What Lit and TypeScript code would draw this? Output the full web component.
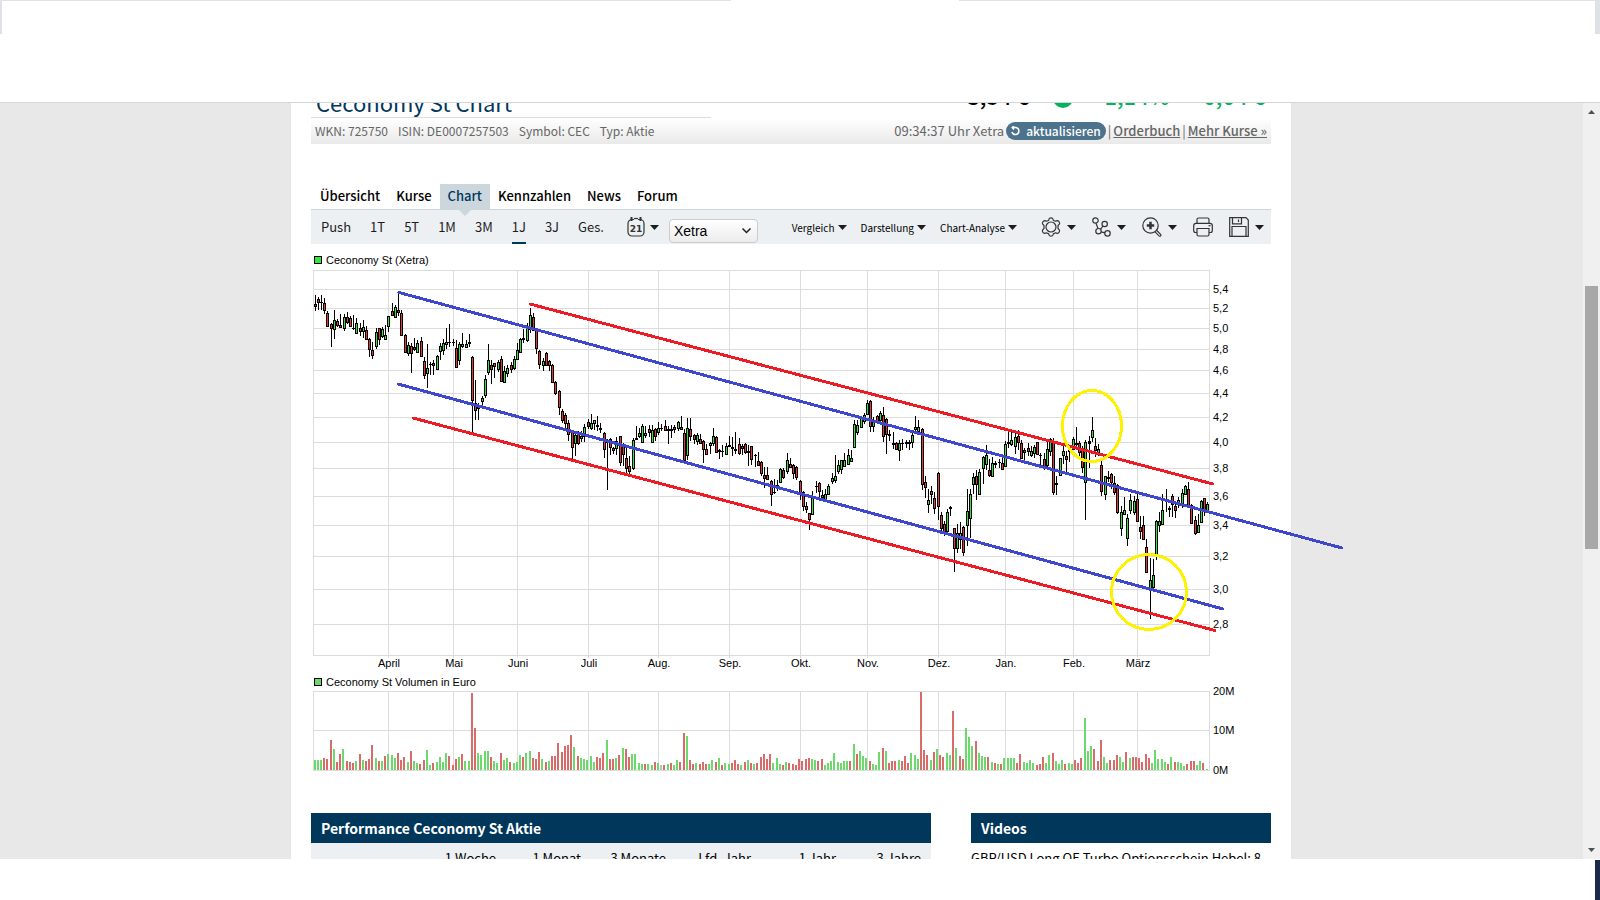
import { LitElement, html, svg, css, nothing } from "lit";
import { customElement } from "lit/decorators.js";
import { classMap } from "lit/directives/class-map.js";

const THIRD = 3;
const PLOT = { x: 2, y: 20, w: 896, h: 385 };
const VOL = { x: 2, y: 441, w: 896, h: 79 };

const MONTHS: [string, number][] = [
  ["April", 75], ["Mai", 140], ["Juni", 204], ["Juli", 275], ["Aug.", 345], ["Sep.", 416],
  ["Okt.", 487], ["Nov.", 554], ["Dez.", 625], ["Jan.", 692], ["Feb.", 760], ["März", 824],
];

const PRICES: [string, number][] = [
  ["5,4", 19], ["5,2", 38], ["5,0", 58], ["4,8", 79], ["4,6", 100], ["4,4", 123], ["4,2", 147],
  ["4,0", 172], ["3,8", 198], ["3,6", 226], ["3,4", 255], ["3,2", 286], ["3,0", 319], ["2,8", 354],
];

// Candles: x, high, body top, body bottom, low, tone (g rising, r falling, none flat).
// Each run counts in thirds of a plot unit from its own origin.
const CANDLES: { x: number; y: number; data: string }[] = [
  {
    x: -8, y: -10, data: `31,105,133,139,155,r 40,112,118,128,150,r 49,105,127,127,150 58,115,130,150,162,r 67,153,160,200,200,r
79,190,192,206,262,r 88,150,181,208,237,g 97,177,184,197,203,r 106,162,197,203,206,r 118,162,172,206,215,g 127,156,173,188,193,r
136,170,176,200,200,r 145,165,205,205,210 154,176,191,220,220,g 166,191,206,215,230,r 175,180,202,215,235,g 184,200,211,238,238,r
193,235,238,268,292,r 202,247,270,287,299,r 214,205,217,260,267,g 223,205,206,238,256,r 232,202,208,230,236,g 241,195,226,238,240,g
250,168,170,200,216,g 262,130,154,167,168,r 271,137,142,173,175,g 280,99,151,158,168,r 289,150,160,226,226,r 301,223,226,278,278,r
310,248,256,280,290,g 319,250,259,281,341,r 328,236,262,269,275,r 337,242,250,277,281,g 349,232,244,290,290,r 358,292,304,346,359,r
367,252,325,341,384,g 376,306,313,313,345 385,300,311,317,345,r 397,285,289,328,328,g 406,250,259,275,300,g 415,238,251,272,285,g
424,205,246,254,268,g 433,192,246,246,262 445,238,247,247,260 454,240,265,323,326,r 463,248,253,302,315,g 472,220,253,260,265,g
484,240,253,263,266,g 493,222,247,250,262 502,290,292,422,518,r 511,360,431,452,480,r 520,430,440,446,480,g 532,410,415,424,440,g
541,345,358,406,415,g 550,252,301,338,345,g 559,302,317,328,372,r 568,310,311,320,354,r 580,300,307,328,338,g 589,290,298,364,364,r
598,320,335,366,368,g 607,316,325,340,352,g 619,308,317,329,340,r 628,290,298,326,330,g 637,250,271,298,300,g 646,236,238,276,278,g
655,208,236,239,250 667,190,205,241,246,g 676,145,166,208,220,g 685,160,172,210,215,r 694,205,210,266,282,r 703,270,274,313,328,r
715,295,304,316,335,g 724,276,280,316,320,r 733,302,304,316,334,r 742,312,316,367,370,r 751,365,368,400,405,r 763,390,394,443,465,r
772,448,454,482,490,r 781,460,466,490,513,r 790,480,490,524,545,r 802,510,515,562,600,r 811,524,526,550,588,g 820,515,524,550,556,r
829,514,528,535,548,g 838,492,503,530,546,g 850,478,487,499,508,r 859,462,490,506,510,g 868,480,481,490,512,g 877,468,497,500,515
886,490,506,508,520 898,518,520,568,596,r 907,538,545,548,692`,
  },
  {
    x: 247, y: 90, data: `151,235,238,262,286,r 160,262,265,272,284,r 169,232,244,265,286,g 181,228,230,307,318,r 190,250,256,283,318,r
199,260,295,325,344,r 208,290,318,335,350,r 220,236,241,325,332,g 229,198,235,239,240 238,204,220,230,235,g 247,192,199,247,247,g
256,200,220,227,236,g 268,196,208,217,232,r 277,196,211,247,248,g 286,206,208,230,245,r 295,188,205,217,226,g 304,193,205,205,214
316,182,200,211,215,r 325,198,208,211,252 334,196,208,211,234 343,196,202,209,220,r 355,183,187,205,214,g 364,170,202,209,212,r
373,208,220,300,302,r 382,174,205,286,300,g 391,175,208,230,244,r 403,224,226,238,254,r 412,220,226,244,255,g 421,224,238,250,250,r
430,240,244,268,310,r 439,252,268,283,283,r 451,246,250,257,284,g 460,206,229,250,258,g 469,230,232,277,280,r 478,268,272,274,298
487,256,274,275,292 499,250,259,283,286,g 508,228,256,258,260 517,232,262,266,290,r 526,218,267,270,282 538,234,253,280,286,r
547,252,260,266,286,r 556,250,254,277,282,r 565,255,274,278,318,r 574,258,260,298,315,r 586,284,285,286,321 595,278,305,317,320,r
604,304,307,341,350,r 613,322,346,355,384,r 622,322,346,358,362,r 634,360,364,404,438,r 643,358,398,398,402 652,362,376,380,394,r
661,325,328,367,368,g 670,326,331,352,358,r 682,280,301,334,342,g 691,296,313,322,322,r 700,312,316,340,358,r 709,318,322,352,360,r
721,362,364,404,420,r 730,394,398,440,455,r 739,428,438,449,460,r 748,460,460,479,510,r 757,395,413,463,464,g`,
  },
  {
    x: 487, y: 110, data: `49,304,318,318,340 58,308,310,335,355,r 67,330,346,352,356,r 76,328,344,358,362,g 85,314,319,343,345,g
97,280,295,305,312,g 106,225,290,302,310,g 115,240,256,274,284,g 124,240,242,268,282,g 133,220,242,260,262,g 145,208,226,254,254,g
154,212,235,244,246,g 163,120,133,202,204,g 172,120,136,158,165,g 184,108,115,142,144,g 193,100,106,125,132,g 202,60,70,103,104,g
211,62,64,140,156,r 220,112,125,140,158,g 232,105,110,125,130,r 241,94,100,122,128,g 250,82,106,170,188,r 259,115,118,163,222,r
268,152,163,165,184 280,158,190,192,208 289,186,190,208,212,r 298,180,190,211,243,g 307,178,190,191,212 319,180,186,190,206
328,182,188,190,210 337,158,166,188,206,g 346,110,142,149,156,g 355,120,142,154,156,g 367,144,148,314,332,r 376,288,307,322,354,r
385,328,361,373,400,g 394,320,334,344,374,r 403,338,355,385,402,r 415,278,280,380,422,r 424,396,406,446,456,r 433,424,433,457,470,r
442,388,397,455,458,g 451,378,381,386,408 463,444,445,506,576,r 472,434,460,506,520,g 481,426,460,478,508,g 490,440,442,518,530,r
502,328,394,436,500,g 511,328,343,415,474,g 520,280,292,314,344,g 529,272,290,314,362,r 538,268,277,344,346,g 550,230,232,265,312,g
559,195,226,253,270,g 568,238,271,287,292,r 577,232,250,290,290,g 586,245,250,252,264 598,238,246,248,266 607,232,250,268,270,r`,
  },
  {
    x: 687, y: 110, data: `16,185,193,260,262,g 25,155,187,190,204 34,152,182,194,200,g 46,160,172,199,222,g 55,152,169,188,210,r
64,180,190,235,238,r 73,204,212,217,244,r 85,190,206,214,228,r 94,200,214,226,232,g 103,196,202,220,234,g 112,186,188,222,224,r
121,220,226,226,262 133,220,238,266,272,r 142,178,208,257,262,g 151,174,178,214,228,g 160,174,184,337,345,r 169,288,310,314,345
181,235,236,286,288,g 190,198,214,226,254,g 199,215,229,238,278,r 208,210,210,214,248 220,172,178,208,210,g 229,142,191,193,205
238,184,190,217,230,r 247,200,206,262,280,r 256,180,188,307,420,g 268,170,184,190,266 277,113,151,172,188,g 286,174,199,210,232,r
295,192,208,220,228,g 304,244,256,334,350,r 316,288,289,343,362,g 325,273,292,294,308 334,280,283,308,328,r 343,290,310,338,346,r
352,314,316,398,402,r 364,380,397,445,468,g 373,352,391,403,406,g 382,402,415,475,500,g 391,344,361,391,402,g 403,350,364,398,406,g
412,340,358,424,428,r 421,410,442,454,478,r 430,410,436,478,480,r 439,478,502,578,580,r 451,536,601,628,717,g 460,538,586,622,628,g
469,420,424,526,542,g 478,398,424,436,456,g 487,344,391,433,436,g 499,328,358,364,398,g 508,378,385,388,412 517,344,349,373,412,r
526,372,379,391,414,r 535,352,362,374,386,g 547,328,340,370,386,g 556,316,319,342,346,g 565,308,328,376,380,r 574,372,376,430,432,r
586,410,421,460,466,r 595,404,436,457,460,g 604,360,364,427,430,g 613,354,356,394,410,r 622,368,373,392,396,g`,
  },
];

// One entry for each trading day: tone and height in thirds of a plot unit.
const VOLUME = `g29 g29 g29 r35 r32 r89 g62 r23 r47 g62 r26 r23 r20 g26 r47 g29 r26 r32 r74 g35 r26 g26 r41 g47
g44 g35 r50 r29 r38 g23 r56 g26 g20 r17 r29 g59 g14 r20 g23 g38 g23 g50 r41
r14 r32 g38 r47 g26 g26 r230 r125 g50 g44 g56 g56 r38 g26 g20 r50 g29 g35 r23 g20 g23
g44 r38 g50 g56 r35 r32 r53 g32 r23 g26 r41 r41 r80 r53 r71 r74 r104 g68 r41 g35 g32 g29
g41 g23 r38 r35 r50 g89 r32 r32 g35 r44 g65 r62 r38 g47 g47 g20 g17 r17 g17 g14 r23 g20
n14 r14 g17 r20 g14 g29 r23 r110 g101 r29 r17 g20 r17 r23 r17 g17 g29 r23 g35 r14 g20 g17
r20 r29 r17 g14 r23 g29 r20 g17 r20 r38 r47 r32 r47 g20 g35 g17 r14 g23 r20 r17 r14
r32 r26 r32 r35 g32 g29 r26 r32 g14 g20 g26 g50 g23 g20 g26 g26 r26 g77 r47 g56 g41
g35 r26 g17 g14 g53 r65 g56 r20 r26 r26 g29 r26 r41 r20 g50 g44 g32 r233 r59 r44 g29 r53
g62 r44 r38 g50 g44 r176 g65 r41 r32 g125 g98 g71 r86 g50 g41 g38 r38 g23 r20 g17 r17
g35 g35 g35 g35 r20 r47 g23 g20 g29 g20 r14 r17 r38 g20 g44 r50 g26 g17 g29 r17 g20 g17
r29 r20 r35 g155 g56 g71 r62 r26 r89 g38 g20 r29 r29 r44 g38 g23 r53 g35 r38
r38 r35 r23 r47 r35 g20 g59 g32 g32 g23 r17 g38 r23 g23 g20 g11 r17 r26 r26 g14 g26 r20 g2`.split(/\s+/);

const CANDLE_FILL: Record<string, string> = { g: "#33e63a", r: "#e63737" };
const VOLUME_FILL: Record<string, string> = { g: "#6bd96b", r: "#d96b6b", n: "#c0c0c0" };

@customElement("price-chart")
class PriceChart extends LitElement {
  static styles = css`
    :host { display: block; }
    svg { display: block; width: 100%; overflow: visible; }
    text { font: 11px "Liberation Sans", Arial, sans-serif; fill: #000; }
    .crisp { shape-rendering: crispEdges; }
    .mark { fill: none; stroke-width: 3; stroke-linecap: round; }
    .blue { stroke: #3f48cc; }
    .red { stroke: #ed1c24; }
    .yellow { stroke: #fff200; }
  `;

  private grid() {
    const bottom = PLOT.h;
    const vertical = MONTHS.map(([, x]) => `M${x} 0V${bottom + 2}`).join("");
    const horizontal = PRICES.map(([, y]) => `M0 ${y}H${PLOT.w}`).join("");
    return svg`<path d="M0 0H${PLOT.w}V${bottom}H0Z${vertical}${horizontal}"
      transform="translate(${PLOT.x + 0.5} ${PLOT.y + 0.5})" fill="none" stroke="#dcdcdc"/>`;
  }

  private candles() {
    return CANDLES.map((run) =>
      run.data.split(/\s+/).map((entry) => {
        const [x, high, top, bottom, low, tone] = entry.split(",");
        const px = PLOT.x + run.x + Math.floor(+x / THIRD);
        const at = (v: string) => PLOT.y + run.y + Math.floor(+v / THIRD);
        const bodyHeight = Math.max(1, at(bottom) - at(top) + 1);
        return svg`<rect x=${px} y=${at(high)} width="1" height=${Math.max(1, at(low) - at(high))}/>
          <rect x=${px - 1} y=${at(top)} width="3" height=${bodyHeight}/>
          ${tone && bodyHeight > 2
            ? svg`<rect x=${px} y=${at(top) + 1} width="1" height=${bodyHeight - 2} fill=${CANDLE_FILL[tone]}/>`
            : nothing}`;
      })
    );
  }

  private volume() {
    const step = (VOL.w - 4) / (VOLUME.length - 1);
    return VOLUME.map((entry, i) => {
      const h = Math.max(1, Math.round(+entry.slice(1) / THIRD));
      return svg`<rect x=${VOL.x + 1 + Math.floor(i * step + 0.1)} y=${VOL.y + VOL.h - h} width="2" height=${h}
        fill=${VOLUME_FILL[entry[0]]}/>`;
    });
  }

  render() {
    const volumeGrid = MONTHS.map(([, x]) => `M${x} 0V${VOL.h}`).join("");
    return html`<svg viewBox="0 0 960 530" role="img" aria-label="Ceconomy St Kurs und Volumen">
      <rect class="crisp" x="3.5" y="6.5" width="7" height="7" fill="#33e63a" stroke="#000"/>
      <text x="15" y="14">Ceconomy St (Xetra)</text>
      <g class="crisp">${this.grid()}</g>
      <g class="crisp">${this.candles()}</g>
      ${PRICES.map(([label, y]) => svg`<text x="902" y=${PLOT.y + y + 4}>${label}</text>`)}
      ${MONTHS.map(([label, x]) => svg`<text x=${PLOT.x + x + 1} y="417" text-anchor="middle">${label}</text>`)}
      <rect class="crisp" x="3.5" y="428.5" width="7" height="7" fill="#6bd96b" stroke="#000"/>
      <text x="15" y="436">Ceconomy St Volumen in Euro</text>
      <path class="crisp" transform="translate(${VOL.x + 0.5} ${VOL.y + 0.5})" fill="none" stroke="#dcdcdc"
        d="M0 0H${VOL.w}V${VOL.h}H0ZM0 39H${VOL.w}${volumeGrid}"/>
      <g class="crisp">${this.volume()}</g>
      <text x="902" y="445">20M</text>
      <text x="902" y="484">10M</text>
      <text x="902" y="524">0M</text>
      <g class="mark crisp">
        <path class="blue" d="M88 42.5L1031 298M87 134L912 359"/>
        <path class="red" d="M219 54L902 234M102 168L904 380.500"/>
        <ellipse class="yellow" cx="781" cy="176" rx="29.500" ry="35.500"/>
        <ellipse class="yellow" cx="838" cy="342" rx="37.500" ry="37.500"/>
      </g>
    </svg>`;
  }
}

const caret = html`<svg class="caret" width="9" height="5" viewBox="0 0 9 5"><path d="M0 0H9L4.500 5Z"/></svg>`;

const calendarIcon = html`<svg class="icon" width="18" height="20" viewBox="0 0 18 20">
  <rect x="1" y="2.500" width="16" height="16.500" rx="4" />
  <path d="M4.500 0V4M13.500 0V4" stroke-width="2"/><path d="M7 2.500H11" stroke="#ecf0f3"/><path d="M7 1.500H11"/>
  <text x="9" y="15">21</text></svg>`;

const gearIcon = html`<svg class="icon" width="20" height="20" viewBox="0 0 20 20">
  <path d="M8 2.200Q8.300 .800 10 .800T12 2.200L12.500 3.500L14.500 4.200L16.300 3.700Q17.600 3.800 18.300 5.200T18.300 7.200L17 8.600V11.400L18.300 12.800Q18.900 13.600 18.200 15T16.300 16.300L14.500 15.800L12.500 16.700L12 17.900Q11.500 19.200 10 19.200T8 17.900L7.500 16.700L5.500 15.800L3.700 16.300Q2.400 16.200 1.700 15T1.700 12.800L3 11.400V8.600L1.700 7.200Q1.100 6.300 1.800 5T3.700 3.700L5.500 4.200L7.500 3.500Z"/>
  <circle cx="10" cy="10" r="5"/></svg>`;

const nodesIcon = html`<svg class="icon" width="19" height="20" viewBox="0 0 19 20">
  <circle cx="3.500" cy="3.500" r="2.700"/><circle cx="12.700" cy="7" r="2.700"/><circle cx="6.500" cy="14.200" r="2.700"/><circle cx="15.500" cy="16.400" r="2.700"/>
  <path d="M4 6.200L6 11.500M11 9L8.500 12.300M9.200 14.800L12.900 15.900"/></svg>`;

const zoomIcon = html`<svg class="icon" width="20" height="20" viewBox="0 0 20 20">
  <circle cx="8.500" cy="8.500" r="7.700"/><path d="M14.300 13L18.600 17.300Q19.300 18.200 18.600 18.900T17 18.900L12.800 14.600"/>
  <path d="M8.500 4.800V12.200M4.800 8.500H12.200" stroke-width="2.500"/></svg>`;

const printerIcon = html`<svg class="icon" width="20" height="20" viewBox="0 0 20 20">
  <path d="M4 6V2.500Q4 1 5.500 1H14.500Q16 1 16 2.500V6M4 15.500H2.500Q.700 15.500 .700 13.500V8.500Q.700 6.300 3 6.300H17Q19.300 6.300 19.300 8.500V13.500Q19.300 15.500 17.500 15.500H16"/>
  <path d="M4 11.500H16V17.500Q16 19 14.500 19H5.500Q4 19 4 17.500Z"/><path d="M15.500 8.700H17.500"/></svg>`;

const saveIcon = html`<svg class="icon" width="20" height="20" viewBox="0 0 20 20">
  <path d="M.700 .700H17L19.300 3V19.300H.700Z"/><path d="M3.500 1V6.800H12.500V1M9.500 2.500V5"/><path d="M3 19V9.500H17V19"/></svg>`;

@customElement("app-root")
class AppRoot extends LitElement {
  static styles = css`
    * { box-sizing: border-box; }
    :host {
      display: flex; flex-direction: column; height: 100vh; overflow: hidden; background: #fff;
      font-family: "Noto Sans CJK SC", "Open Sans", sans-serif; font-size: 12px; color: #000;
    }
    button { border: 0; padding: 0; margin: 0; background: none; font: inherit; color: inherit; cursor: pointer; }
    a { color: inherit; text-decoration: none; }
    h1, h2 { margin: 0; }

    .frame { flex: none; height: 103px; display: flex; justify-content: space-between; border-bottom: 1px solid #d5d5d5; }
    .edge { height: 34px; border-top: 1px solid #dee1e6; }
    .edge-left { flex: 0 1 731px; border-left: 2px solid #dee1e6; }
    .edge-right { flex: 0 1 641px; border-right: 5px solid #dee1e6; }
    .foot { flex: none; height: 41px; display: flex; justify-content: flex-end; padding-top: 1px; }
    .foot-edge { width: 5px; background: #1b2a4a; }

    .view { flex: 1; min-height: 0; display: flex; background: #e8e8e8; overflow: hidden; }
    .scroll { flex: 1; min-width: 0; overflow: hidden; padding-right: 1px; }
    .page { max-width: 1000px; min-height: 100%; margin: 0 auto; padding: 0 20px; background: #fff; }
    .bar { flex: none; width: 17px; background: #f0f0f0; display: flex; flex-direction: column; align-items: center; padding: 7px 0; }
    .bar svg { fill: #505050; }
    .thumb { width: 13px; height: 263px; margin-top: 172px; background: #a8a8a8; }
    .thumb + svg { margin-top: auto; }

    .head { display: flex; justify-content: space-between; height: 15px; align-items: flex-end; }
    .title { flex: 0 0 400px; padding-left: 5px; border-bottom: 1px solid #dcdcdc; font-size: 22px; line-height: 30px; font-weight: 400; color: #00375b; }
    .quote { display: flex; align-items: center; padding: 0 6px 8px 0; font-size: 22px; line-height: 30px; font-weight: 500; }
    .up { color: #00b45f; }
    .up + .up { margin-left: 34px; }
    .dot { width: 20px; height: 20px; margin: 6px 19px 0 24px; border-radius: 50%; background: #00b45f; }

    .info { display: flex; justify-content: space-between; align-items: center; height: 26px; padding: 0 4px 0 4px; line-height: 20px; color: #666; background: linear-gradient(#fff, #e9e9e9); }
    .facts { display: flex; gap: 10px; }
    .feed { display: flex; align-items: center; gap: 2px; font-size: 13px; }
    .feed a { font-weight: 500; text-decoration: underline; }
    .refresh { display: flex; align-items: center; gap: 6px; height: 18px; padding: 0 5px; border-radius: 9px; background: #4c728c; color: #fff; font-size: 12px; font-weight: 500; }
    .refresh svg { fill: none; stroke: #fff; stroke-width: 1.500; }

    .tabs { display: flex; margin-top: 40px; padding-left: 1px; border-bottom: 1px solid #ccd6dd; font-size: 13px; font-weight: 500; line-height: 23px; }
    .tab { padding: 0 8px 2px; }
    .tab-on { position: relative; background: #ccd6dd; color: #00375b; }
    .tab-on::after { content: ""; position: absolute; left: 50%; top: 100%; margin-left: -7px; border: 7px solid transparent; border-top-color: #ccd6dd; border-bottom: 0; }

    .tools { display: flex; align-items: center; height: 34px; padding: 0 7px 0 10px; background: #ecf0f3; color: #1d1d1d; }
    .ranges { display: flex; gap: 19px; font-size: 13px; }
    .range { height: 34px; line-height: 28px; border-top: 2px solid transparent; border-bottom: 2px solid transparent; }
    .range-on { border-bottom-color: #00375b; }
    .tool { display: flex; align-items: center; gap: 3px; }
    .icons .tool { gap: 6px; }
    .calendar { gap: 5px; margin: 0 10px 0 23px; }
    .caret { fill: #1d1d1d; }
    .icon { fill: none; stroke: #333; stroke-width: 1.200; }
    .icon text { font: bold 9px "DejaVu Sans", sans-serif; text-anchor: middle; fill: #333; stroke: none; }
    .place { position: relative; display: flex; align-self: flex-end; padding-bottom: 1px; }
    .place select { appearance: none; width: 89px; height: 24px; padding: 0 4px; border: 1px solid #ccc; border-radius: 4px; background: linear-gradient(#fff, #ececec); font: 14px "Liberation Sans", Arial, sans-serif; color: #000; }
    .chevron { position: absolute; right: 7px; top: 9px; fill: none; stroke: #222; stroke-width: 1.500; pointer-events: none; }
    .menus { display: flex; gap: 14px; margin-left: auto; font-size: 10px; color: #000; }
    .icons { display: flex; gap: 16px; margin-left: 24px; }
    .sr { position: absolute; width: 1px; height: 1px; overflow: hidden; clip-path: inset(50%); }

    .chart { margin-top: 6px; }
    .boxes { display: grid; grid-template-columns: 620fr 300fr; column-gap: 40px; margin-top: 33px; }
    .box-title { height: 30px; padding-left: 10px; background: #00375b; color: #fff; font-size: 14px; font-weight: 700; line-height: 30px; }
    .perf { width: 100%; border-collapse: collapse; background: #ecf0f3; }
    .perf th { width: 85px; padding: 5px 10px 0 0; font-size: 13px; font-weight: 400; line-height: 20px; text-align: right; white-space: nowrap; }
    .perf .first { width: auto; }
    .video { display: block; padding-top: 5px; font-size: 13px; line-height: 20px; white-space: nowrap; overflow: hidden; }
  `;

  private tabs = ["Übersicht", "Kurse", "Chart", "Kennzahlen", "News", "Forum"];
  private ranges = ["Push", "1T", "5T", "1M", "3M", "1J", "3J", "Ges."];
  private menus = ["Vergleich", "Darstellung", "Chart-Analyse"];
  private periods = ["1 Woche", "1 Monat", "3 Monate", "Lfd. Jahr", "1 Jahr", "3 Jahre"];

  private iconTool(label: string, icon: unknown, menu = true) {
    return html`<button class="tool" aria-label=${label}>${icon}${menu ? caret : nothing}</button>`;
  }

  render() {
    return html`
      <div class="frame"><div class="edge edge-left"></div><div class="edge edge-right"></div></div>
      <div class="view">
        <div class="scroll">
          <main class="page">
            <header class="head">
              <h1 class="title">Ceconomy St Chart</h1>
              <div class="quote">
                <span>3,54 €</span><span class="dot"></span><span class="up">+1,14%</span><span class="up">0,04 €</span>
              </div>
            </header>
            <div class="info">
              <div class="facts"><span>WKN: 725750</span><span>ISIN: DE0007257503</span><span>Symbol: CEC</span><span>Typ: Aktie</span></div>
              <div class="feed">
                <span>09:34:37 Uhr Xetra</span>
                <button class="refresh"><svg width="9" height="10" viewBox="0 0 9 10"><path d="M1 1.500H4.500A3.500 3.500 0 1 1 1 6M3 0L1.200 1.500L3 3.500"/></svg>aktualisieren</button>
                <span>|</span><a href="#orderbuch">Orderbuch</a><span>|</span><a href="#kurse">Mehr Kurse »</a>
              </div>
            </div>
            <nav class="tabs">
              ${this.tabs.map((t) => html`<a class=${classMap({ tab: true, "tab-on": t === "Chart" })} href="#${t}">${t}</a>`)}
            </nav>
            <div class="tools">
              <div class="ranges">
                ${this.ranges.map((r) => html`<button class=${classMap({ range: true, "range-on": r === "1J" })}>${r}</button>`)}
              </div>
              <button class="tool calendar" aria-label="Zeitraum">${calendarIcon}${caret}</button>
              <label class="place"><span class="sr">Börsenplatz</span><select><option>Xetra</option></select>
                <svg class="chevron" width="9" height="6" viewBox="0 0 9 6"><path d="M.500 .500L4.500 4.500L8.500 .500"/></svg></label>
              <div class="menus">${this.menus.map((m) => html`<button class="tool">${m}${caret}</button>`)}</div>
              <div class="icons">
                ${this.iconTool("Einstellungen", gearIcon)}${this.iconTool("Verknüpfungen", nodesIcon)}
                ${this.iconTool("Zoom", zoomIcon)}${this.iconTool("Drucken", printerIcon, false)}${this.iconTool("Speichern", saveIcon)}
              </div>
            </div>
            <price-chart class="chart"></price-chart>
            <div class="boxes">
              <section>
                <h2 class="box-title">Performance Ceconomy St Aktie</h2>
                <table class="perf"><thead><tr><th class="first"></th>${this.periods.map((p) => html`<th scope="col">${p}</th>`)}</tr></thead></table>
              </section>
              <section>
                <h2 class="box-title">Videos</h2>
                <a class="video" href="#video">GBP/USD Long OE Turbo Optionsschein Hebel: 8</a>
              </section>
            </div>
          </main>
        </div>
        <div class="bar" aria-hidden="true">
          <svg width="7" height="4" viewBox="0 0 7 4"><path d="M3.500 0L7 4H0Z"/></svg>
          <div class="thumb"></div>
          <svg width="7" height="4" viewBox="0 0 7 4"><path d="M0 0H7L3.500 4Z"/></svg>
        </div>
      </div>
      <div class="foot"><div class="foot-edge"></div></div>
    `;
  }
}
